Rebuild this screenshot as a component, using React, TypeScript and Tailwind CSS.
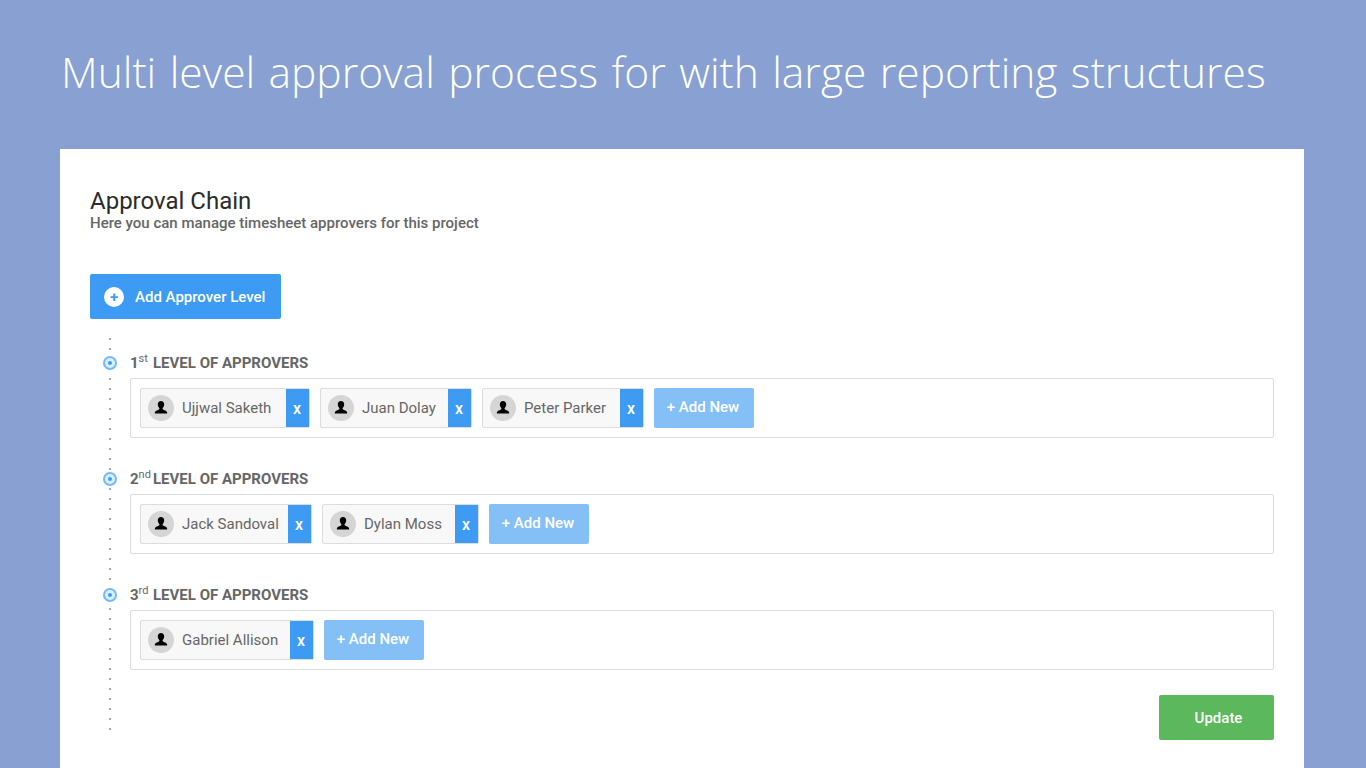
const levels = [
  {
    n: "1",
    sup: "st",
    people: [
      { name: "Ujjwal Saketh", w: "w-[170px]" },
      { name: "Juan Dolay", w: "w-[152px]" },
      { name: "Peter Parker", w: "w-[162px]" },
    ],
  },
  {
    n: "2",
    sup: "nd",
    people: [
      { name: "Jack Sandoval", w: "w-[172px]" },
      { name: "Dylan Moss", w: "w-[157px]" },
    ],
  },
  { n: "3", sup: "rd", people: [{ name: "Gabriel Allison", w: "w-[174px]" }] },
];

function Person() {
  return (
    <svg width="16" height="16" viewBox="0 0 16 16" className="text-black">
      <path
        fill="currentColor"
        d="M8 1c-2 0-3.200 1.400-3.200 3.300 0 1.500.6 2.900 1.500 3.700.2.2.2.9 0 1.300-.8.9-3 1-4 2.100-.4.5-.5 1.400-.5 2.100h12.400c0-.7-.1-1.600-.5-2.100-1-1.100-3.200-1.200-4-2.100-.2-.4-.2-1.100 0-1.300.9-.8 1.500-2.200 1.500-3.700C11.200 2.400 10 1 8 1z"
      />
    </svg>
  );
}

function Chip({ name, w }: { name: string; w: string }) {
  return (
    <div className={`${w} flex h-10 items-stretch rounded-[2px] border border-[#dcdcdc] bg-[#f8f8f8]`}>
      <div className="ml-[7px] mr-2 flex h-[26px] w-[26px] shrink-0 items-center justify-center self-center rounded-full bg-[#d5d5d5]">
        <Person />
      </div>
      <span className="flex-1 self-center whitespace-nowrap text-[15px] text-[#666666]">{name}</span>
      <span className="flex w-[23px] shrink-0 items-center justify-center bg-[#3d9bf3] pr-[1px] pt-[2px] text-[16px] font-medium text-white">
        x
      </span>
    </div>
  );
}

function Marker() {
  return (
    <span className="absolute left-[13px] top-[3px] flex h-[14px] w-[14px] items-center justify-center rounded-full border-2 border-[#74bbf8] bg-[#dcedfd]">
      <span className="h-1 w-1 rounded-full bg-[#3d9bf3]" />
    </span>
  );
}

export default function App() {
  return (
    <div className="h-[768px] overflow-hidden bg-[#88a1d2] font-['Roboto',sans-serif]">
      <header className="flex h-[149px] items-start pl-[61px] pt-[42px]">
        <h1 className="whitespace-nowrap font-['Open_Sans',sans-serif] text-[42.5px] font-light leading-[60px] text-white [word-spacing:2.4px]">
          Multi level approval process for with large reporting structures
        </h1>
      </header>
      <main className="ml-[60px] mr-[62px] h-[619px] bg-white px-[30px] pt-[38px]">
        <h2 className="text-[24px] leading-7 text-[#2b2b2b]">Approval Chain</h2>
        <p className="text-[15px] font-medium leading-[16px] text-[#666666]">
          Here you can manage timesheet approvers for this project
        </p>
        <button className="mt-[43px] flex h-[45px] w-[191px] items-center rounded-[2px] bg-[#3d9bf3] pl-[14px] pt-[1px] text-[15px] font-medium text-white">
          <span className="mr-[11px] flex h-5 w-5 items-center justify-center rounded-full bg-white text-[15px] font-bold leading-none text-[#3d9bf3]">
            +
          </span>
          Add Approver Level
        </button>
        <div className="relative mt-[19px] pl-[40px] pt-[15px]">
          <div className="absolute left-[19px] top-0 h-[392px] w-[2px] bg-[repeating-linear-gradient(to_bottom,#a9a9a9_0,#a9a9a9_2px,transparent_2px,transparent_10px)]" />
          {levels.map((l) => (
            <section key={l.n} className="relative mb-[31px] [&:nth-of-type(3)]:mb-0">
              <div className="-ml-[40px] relative flex h-5 items-center pl-[40px] text-[15px] font-bold text-[#666666]">
                <Marker />
                <span className="w-[23px] shrink-0">
                  {l.n}
                  <sup className="text-[11px] font-normal">{l.sup}</sup>
                </span>
                <span>LEVEL OF APPROVERS</span>
              </div>
              <div className="mt-[5px] flex h-[60px] items-center gap-[10px] rounded-[2px] border border-[#dcdcdc] pl-[9px]">
                {l.people.map((p) => (
                  <Chip key={p.name} name={p.name} w={p.w} />
                ))}
                <button className="h-10 w-[100px] rounded-[2px] bg-[#84bff6] pb-[2px] pr-[2px] text-[15px] font-medium text-white">
                  + Add New
                </button>
              </div>
            </section>
          ))}
          <div className="mt-[25px] flex justify-end">
            <button className="h-[45px] w-[115px] rounded-[2px] bg-[#5cb85c] pl-[4px] pt-[2px] text-[15px] font-medium text-white">
              Update
            </button>
          </div>
        </div>
      </main>
    </div>
  );
}
